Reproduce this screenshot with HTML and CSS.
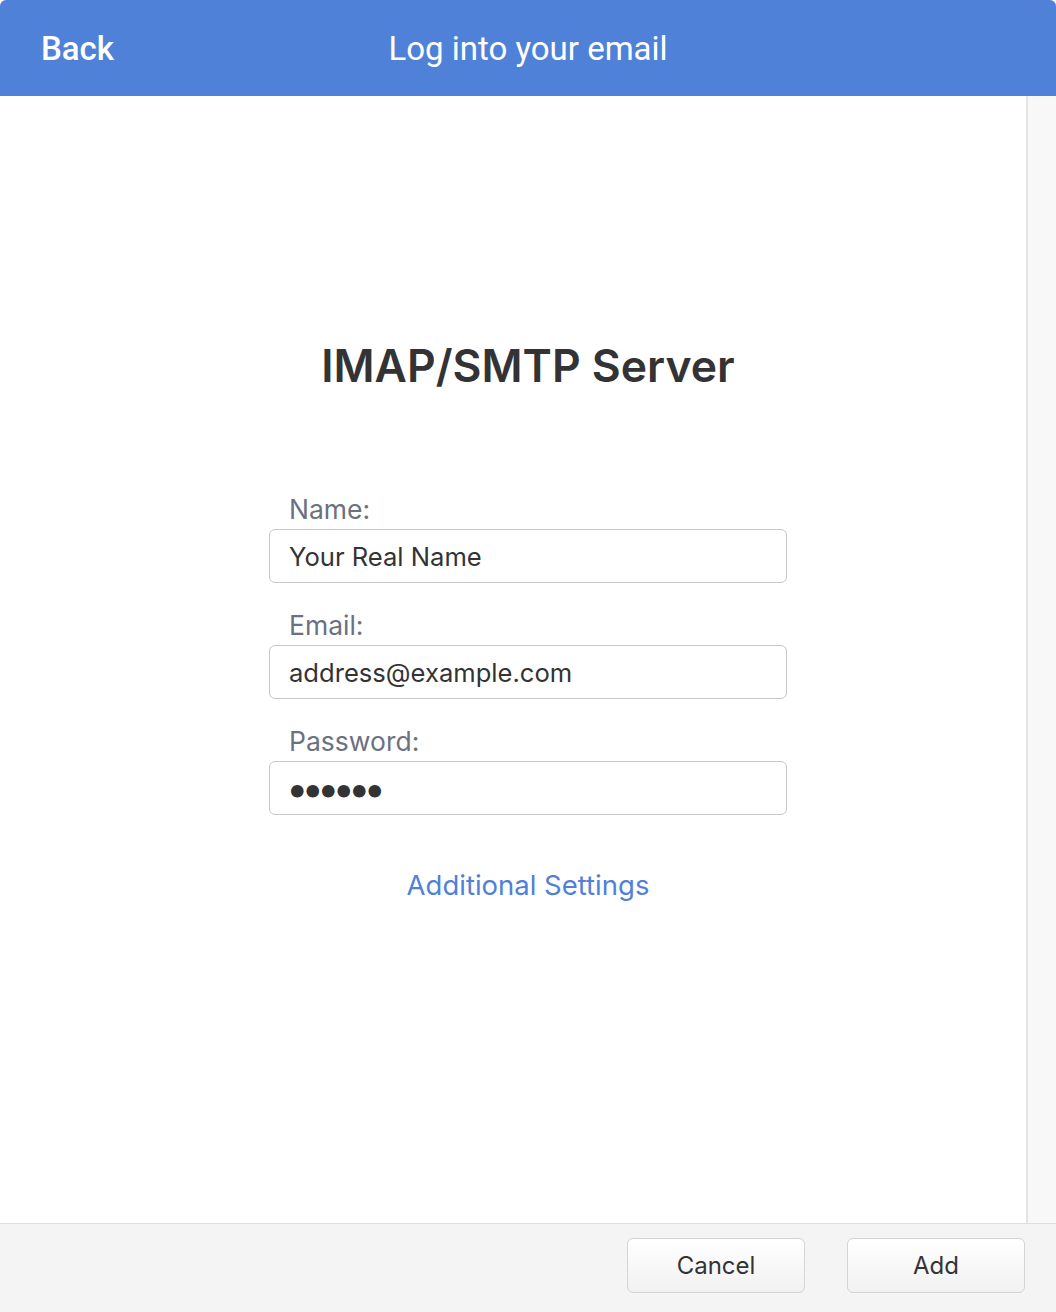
FILE: index.html
```html
<!DOCTYPE html>
<html lang="en">
<head>
  <meta charset="UTF-8">
  <title>Log into your email</title>
  <link rel="stylesheet" href="styles.css">
</head>
<body>
  <div class="window">
    <div class="header">
      <span class="back">Back</span>
      <span class="title">Log into your email</span>
    </div>
    <div class="main">
      <div class="content">
        <h1>IMAP/SMTP Server</h1>
        <form class="login-form">
          <label class="field">
            <span class="field-label">Name:</span>
            <input type="text" value="Your Real Name">
          </label>
          <label class="field">
            <span class="field-label">Email:</span>
            <input type="text" value="address@example.com">
          </label>
          <label class="field">
            <span class="field-label">Password:</span>
            <input type="password" value="secret">
          </label>
        </form>
        <a class="more-link" href="#">Additional Settings</a>
      </div>
      <div class="scrollbar"></div>
    </div>
    <div class="footer">
      <button>Cancel</button>
      <button>Add</button>
    </div>
  </div>
</body>
</html>
```

FILE: styles.css
```css
html, body {
  margin: 0;
  padding: 0;
  background: #ffffff;
}

.window {
  display: flex;
  flex-direction: column;
  height: 1312px;
  font-family: Inter, "Noto Sans", sans-serif;
  color: #333336;
}

.header {
  position: relative;
  display: flex;
  align-items: center;
  justify-content: center;
  height: 96px;
  flex-shrink: 0;
  background: #5081d8;
  color: #ffffff;
  font-family: Roboto, sans-serif;
  font-size: 33px;
  border-top-left-radius: 6px;
  border-top-right-radius: 6px;
}

.back {
  position: absolute;
  left: 41px;
  font-weight: 500;
}

.main {
  position: relative;
  flex: 1;
}

.content {
  display: flex;
  flex-direction: column;
  align-items: center;
  padding-top: 244px;
}

h1 {
  margin: 0 0 102px;
  font-size: 44.5px;
  font-weight: 600;
  line-height: 52px;
  color: #333336;
}

.login-form {
  display: flex;
  flex-direction: column;
  gap: 27px;
  width: 518px;
}

.field {
  display: flex;
  flex-direction: column;
  gap: 5px;
}

.field-label {
  padding-left: 20px;
  font-size: 26.5px;
  line-height: 30px;
  color: #6c7180;
}

.field input {
  box-sizing: border-box;
  height: 54px;
  padding: 0 19px;
  border: 1px solid #c6c6c8;
  border-radius: 6px;
  font-family: Inter, "Noto Sans", sans-serif;
  font-size: 25.6px;
  color: #333336;
  outline: none;
}

.field input[type="password"] {
  padding-left: 16px;
  font-size: 40px;
  letter-spacing: -7px;
}

.more-link {
  margin-top: 53px;
  font-size: 27.5px;
  color: #5081d8;
  text-decoration: none;
}

.scrollbar {
  position: absolute;
  top: 0;
  right: 0;
  bottom: 0;
  width: 28px;
  background: #f8f8f8;
  border-left: 2px solid #e4e4e4;
}

.footer {
  display: flex;
  justify-content: flex-end;
  align-items: flex-start;
  gap: 42px;
  height: 89px;
  flex-shrink: 0;
  box-sizing: border-box;
  padding: 14px 31px 0 0;
  background: #f4f4f4;
  border-top: 1px solid #dedede;
}

.footer button {
  width: 178px;
  height: 55px;
  border: 1px solid #d4d4d4;
  border-radius: 6px;
  background: linear-gradient(#ffffff, #f1f1f1);
  font-family: Inter, "Noto Sans", sans-serif;
  font-size: 24px;
  color: #333336;
}
```
